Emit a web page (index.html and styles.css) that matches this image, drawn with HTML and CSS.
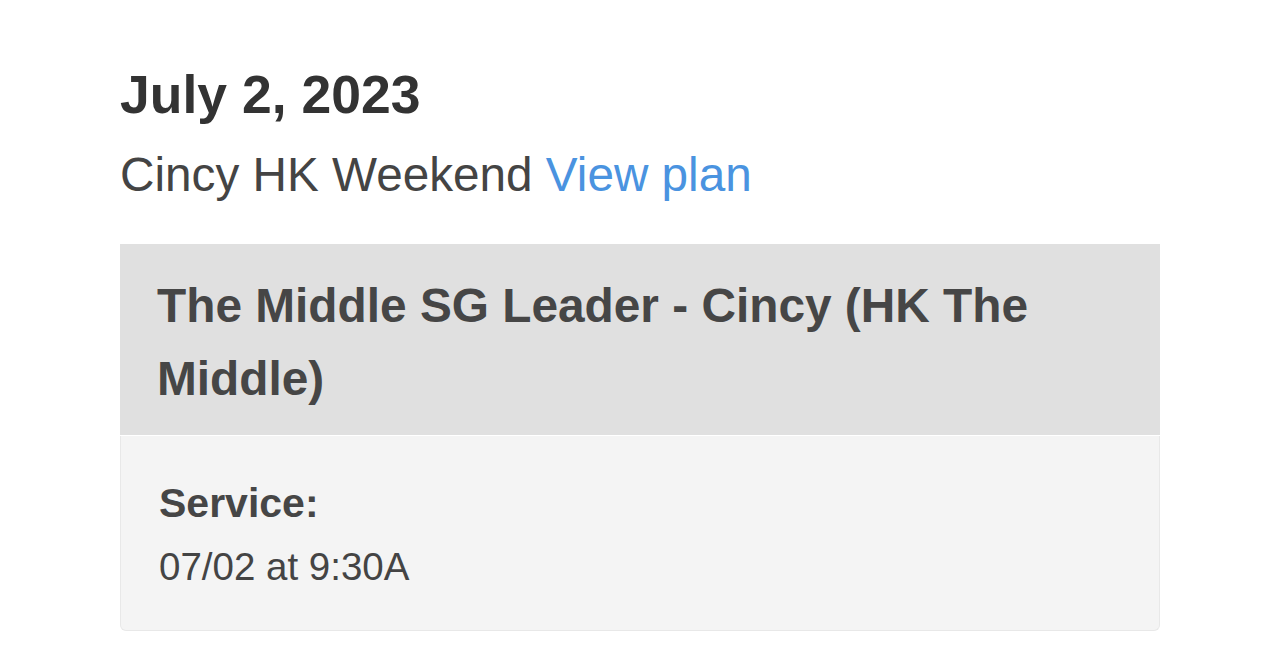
FILE: index.html
```html
<!DOCTYPE html>
<html lang="en">
<head>
    <meta charset="UTF-8">
    <meta name="viewport" content="width=device-width, initial-scale=1.0">
    <title>Schedule</title>
    <link rel="stylesheet" href="styles.css">
</head>
<body>
    <main class="page">
        <h1 class="plan-date">July 2, 2023</h1>
        <p class="plan-name">Cincy HK Weekend <a href="#">View plan</a></p>
        <div class="card">
            <div class="card-header">
                <h2>The Middle SG Leader - Cincy (HK The Middle)</h2>
            </div>
            <div class="card-body">
                <div class="label">Service:</div>
                <div class="time">07/02 at 9:30A</div>
            </div>
        </div>
    </main>
</body>
</html>
```

FILE: styles.css
```css
body {
    font-family: "Liberation Sans", Arial, sans-serif;
    margin: 0;
    padding: 0;
    background-color: #fff;
    color: #333;
}
.page {
    width: 1040px;
    padding: 65px 0 0 120px;
}
.plan-date {
    margin: 0;
    font-size: 53.5px;
    line-height: 60px;
    font-weight: bold;
    color: #333;
}
.plan-name {
    margin: 20px 0 0;
    font-size: 47.7px;
    line-height: 60px;
    color: #444;
}
.plan-name a {
    color: #4a93e0;
    text-decoration: none;
}
.card {
    margin-top: 39px;
}
.card-header {
    background-color: #e0e0e0;
    padding: 25px 37px 20px;
}
.card-header h2 {
    margin: 0;
    font-size: 47.8px;
    line-height: 73px;
    font-weight: bold;
    color: #464646;
}
.card-body {
    margin-top: 1px;
    background-color: #f4f4f4;
    border: 1px solid #e8e8e8;
    border-top: none;
    border-radius: 0 0 6px 6px;
    padding: 42px 38px 38px;
}
.label {
    font-size: 41px;
    line-height: 50px;
    font-weight: bold;
    color: #464646;
}
.time {
    margin-top: 14px;
    font-size: 38.5px;
    line-height: 50px;
    color: #444;
}
```
